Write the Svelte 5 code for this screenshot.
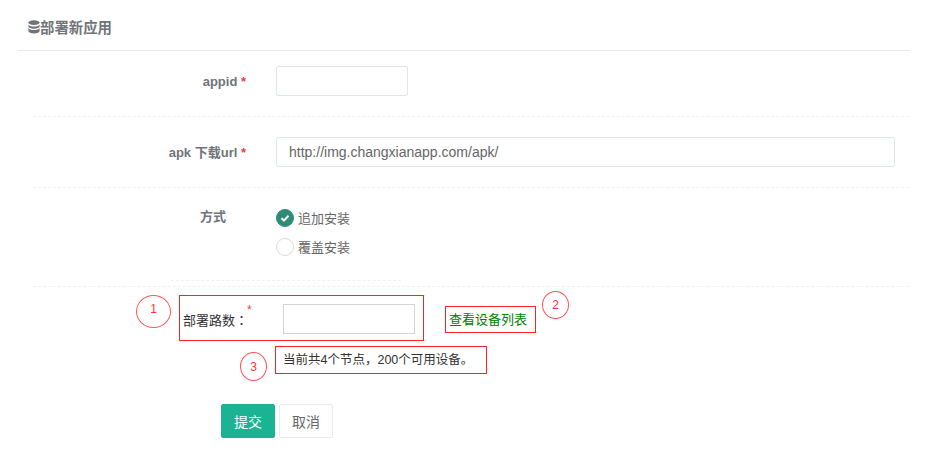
<script>
  let mode = $state("append");
</script>

<div class="page">
  <div class="title">
    <svg class="db" viewBox="0 0 14 14" width="12" height="14" preserveAspectRatio="none">
      <ellipse cx="7" cy="2.6" rx="6.5" ry="2.4" />
      <path d="M.5 4.4C1.5 6 4 6.6 7 6.6s5.500-.6 6.500-2.200V6.500C13.500 7.800 10.500 8.700 7 8.700S.5 7.800.5 6.500z" />
      <path d="M.5 8C1.500 9.500 4 10.100 7 10.100s5.500-.6 6.500-2.100v3C13.500 12.500 10.500 13.500 7 13.500S.5 12.500.5 11z" />
    </svg>
    <span>部署新应用</span>
  </div>

  <div class="row first">
    <label class="lbl" for="appid">appid <em>*</em></label>
    <input id="appid" class="field short" />
  </div>

  <div class="row second">
    <label class="lbl" for="url">apk 下载url <em>*</em></label>
    <input id="url" class="field long" value="http://img.changxianapp.com/apk/" />
  </div>

  <div class="row third">
    <div class="lbl mode">方式</div>
    <div class="radios">
      <button class="radio" onclick={() => (mode = "append")}>
        <span class="dot" class:on={mode === "append"}>
          {#if mode === "append"}
            <svg viewBox="0 0 18 18" width="16" height="16"><path d="M5 9.200l2.800 2.700L13 6.500" fill="none" stroke="#fff" stroke-width="2.200" /></svg>
          {/if}
        </span>
        追加安装
      </button>
      <button class="radio" onclick={() => (mode = "cover")}>
        <span class="dot" class:on={mode === "cover"}>
          {#if mode === "cover"}
            <svg viewBox="0 0 18 18" width="16" height="16"><path d="M5 9.200l2.800 2.700L13 6.500" fill="none" stroke="#fff" stroke-width="2.200" /></svg>
          {/if}
        </span>
        覆盖安装
      </button>
    </div>
    <div class="stub"></div>
  </div>

  <div class="deploy">
    <div class="mark box-a">
      <span class="num n1">1</span>
      <label for="paths">部署路数：<em>*</em></label>
      <input id="paths" class="plain" />
    </div>
    <div class="mark box-b">
      <span class="num n2">2</span>
      查看设备列表
    </div>
  </div>

  <div class="summary">
    <div class="mark box-c">
      <span class="num n3">3</span>
      当前共4个节点，200个可用设备。
    </div>
  </div>

  <div class="actions">
    <button class="btn submit">提交</button>
    <button class="btn cancel">取消</button>
  </div>
</div>

<style>
  :global(body) {
    margin: 0;
    background: #fff;
  }

  .page {
    width: 927px;
    height: 473px;
    overflow: hidden;
    box-sizing: border-box;
    padding: 0 17px;
    font-family: "Liberation Sans", "Noto Sans CJK SC", sans-serif;
    font-size: 13px;
    color: #666;
  }

  .title {
    height: 51px;
    box-sizing: border-box;
    padding: 19px 0 0 11px;
    border-bottom: 1px solid #e7e9ec;
    display: flex;
    font-size: 14.400px;
    line-height: 18px;
    font-weight: 600;
    color: #6f7479;
  }

  .db {
    fill: #6f7479;
    margin-top: 1px;
  }

  .row {
    display: flex;
    margin: 0 1px 0 16px;
    border-bottom: 1px dashed #eef1f5;
    box-sizing: border-box;
  }

  .first {
    height: 66px;
    padding-top: 15px;
  }

  .second {
    height: 71px;
    padding-top: 20px;
  }

  .third {
    height: 99px;
    padding-top: 19px;
    position: relative;
  }

  .lbl {
    width: 213px;
    flex: none;
    text-align: right;
    font-weight: 700;
    line-height: 31px;
    color: #6f7479;
    margin-right: 30px;
  }

  .mode {
    width: 193px;
    margin-right: 50px;
    line-height: 20px;
  }

  em {
    color: #e73d4a;
    font-style: normal;
  }

  .field {
    height: 30px;
    box-sizing: border-box;
    border: 1px solid #e1e5ec;
    border-radius: 2px;
    padding: 0 12px;
    font: inherit;
    font-size: 14px;
    color: #666;
    outline: none;
  }

  .short {
    width: 132px;
  }

  .long {
    width: 619px;
  }

  .radios {
    display: flex;
    flex-direction: column;
    gap: 8px;
  }

  .radio {
    display: flex;
    align-items: center;
    gap: 4px;
    height: 21px;
    padding: 0;
    border: 0;
    background: none;
    font: inherit;
    color: #666;
  }

  .dot {
    width: 18px;
    height: 18px;
    box-sizing: border-box;
    border-radius: 50%;
    border: 1px solid #dcdcd6;
    display: block;
  }

  .dot.on {
    background: #2e8b76;
    border-color: #2e8b76;
  }

  .dot svg {
    display: block;
  }

  .stub {
    position: absolute;
    left: 138px;
    bottom: 5px;
    width: 230px;
    border-top: 1px dashed #eef1f5;
  }

  .deploy {
    display: flex;
    align-items: flex-start;
    margin-top: 8px;
    padding-left: 162px;
    color: #333;
  }

  .mark {
    position: relative;
    box-sizing: border-box;
    border: 1px solid #f22;
  }

  .box-a {
    width: 245px;
    height: 46px;
    display: flex;
    align-items: center;
    padding: 0 8px 0 3px;
    font-size: 13px;
  }

  .box-a label {
    width: 100px;
    padding-top: 3px;
    position: relative;
    font-family: "Liberation Sans", "Noto Sans CJK TC", sans-serif;
  }

  .box-a em {
    position: absolute;
    left: 64px;
    top: -4px;
    font-size: 12px;
  }

  .plain {
    width: 132px;
    height: 30px;
    margin-top: 1px;
    box-sizing: border-box;
    border: 1px solid #d4d4d4;
    outline: none;
    flex: none;
  }

  .box-b {
    margin: 11px 0 0 21px;
    width: 91px;
    height: 27px;
    line-height: 25px;
    padding-left: 3px;
    color: #008000;
  }

  .summary {
    padding-left: 258px;
    margin-top: 5px;
    color: #333;
  }

  .box-c {
    width: 212px;
    height: 28px;
    line-height: 26px;
    padding-left: 7px;
    font-size: 12.500px;
  }

  .num {
    position: absolute;
    box-sizing: border-box;
    border: 1px solid #f55;
    border-radius: 50%;
    display: flex;
    align-items: center;
    justify-content: center;
    color: #f33;
    font-size: 12px;
  }

  .n1 {
    left: -44px;
    top: -1px;
    width: 35px;
    height: 33px;
    padding-bottom: 5px;
  }

  .n2 {
    left: 96px;
    top: -16px;
    width: 27px;
    height: 28px;
  }

  .n3 {
    left: -36px;
    top: 5px;
    width: 27px;
    height: 29px;
  }

  .actions {
    display: flex;
    gap: 4px;
    margin-top: 30px;
    padding-left: 204px;
  }

  .btn {
    height: 34px;
    width: 54px;
    border-radius: 2px;
    font: inherit;
    font-size: 14px;
    padding: 0;
  }

  .submit {
    background: #1bb394;
    border: 1px solid #1bb394;
    color: #fff;
  }

  .cancel {
    background: #fff;
    border: 1px solid #e7ecf1;
    color: #666;
  }
</style>
